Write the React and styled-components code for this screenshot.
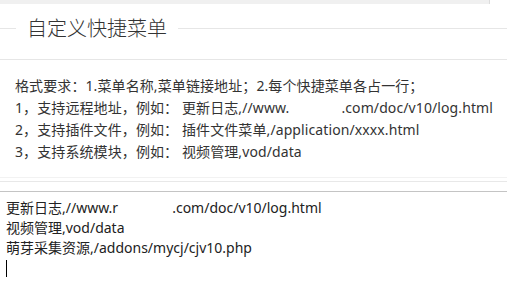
import React from "react";
import styled, { createGlobalStyle } from "styled-components";

const Global = createGlobalStyle`
  html, body { margin: 0; padding: 0; background: #fff; }
  body {
    font-family: "Noto Sans", "Noto Sans CJK SC", sans-serif;
    color: #333;
    overflow: hidden;
  }
`;

const Page = styled.div`
  width: 507px;
  height: 297px;
  overflow: hidden;
  display: flex;
  flex-direction: column;
`;

const TopStrip = styled.div`
  height: 4px;
  width: 490px;
  background: #f0f0f0;
  border-right: 1px solid #dcdcdc;
  box-sizing: border-box;
`;

const TitleField = styled.fieldset`
  margin: 10px 0 0;
  padding: 0;
  border: none;
  border-top: 1px solid #e6e6e6;
  height: 44px;
  min-width: 0;
`;

const Legend = styled.legend`
  margin-left: 16px;
  padding: 0 11px;
  font-family: "Noto Sans CJK SC", sans-serif;
  font-size: 20px;
  font-weight: 300;
  line-height: 28px;
  color: #333;
`;

const HelpBox = styled.div`
  border-top: 1px solid #e6e6e6;
  border-bottom: 1px solid #f2f2f2;
  padding: 15px 0 14px 15px;
`;

const HelpLine = styled.div`
  font-size: 14px;
  line-height: 22px;
  white-space: nowrap;
  letter-spacing: 0.1px;
`;

const Gap = styled.span`
  display: inline-block;
  width: ${(p) => p.$w}px;
`;

const Divider = styled.div`
  margin-top: 3px;
  border-top: 1px solid #e8e8e8;
  height: 9px;
`;

const Editor = styled.div`
  flex: 1;
  border-top: 1px solid #c4c4c4;
  padding: 6px 6px;
  font-size: 14px;
  line-height: 20px;
  color: #222;
  white-space: nowrap;
`;

const EditorLine = styled.div``;

const Caret = styled.div`
  width: 1px;
  height: 17px;
  margin-top: 2px;
  background: #000;
`;

export default function App() {
  return (
    <Page>
      <Global />
      <TopStrip />
      <TitleField>
        <Legend>自定义快捷菜单</Legend>
      </TitleField>
      <HelpBox>
        <HelpLine>格式要求：1.菜单名称,菜单链接地址；2.每个快捷菜单各占一行；</HelpLine>
        <HelpLine>
          1，支持远程地址，例如： 更新日志,//www.<Gap $w={52} />.com/doc/v10/log.html
        </HelpLine>
        <HelpLine>2，支持插件文件，例如： 插件文件菜单,/application/xxxx.html</HelpLine>
        <HelpLine>3，支持系统模块，例如： 视频管理,vod/data</HelpLine>
      </HelpBox>
      <Divider />
      <Editor>
        <EditorLine>
          更新日志,//www.r<Gap $w={54} />.com/doc/v10/log.html
        </EditorLine>
        <EditorLine>视频管理,vod/data</EditorLine>
        <EditorLine>萌芽采集资源,/addons/mycj/cjv10.php</EditorLine>
        <Caret />
      </Editor>
    </Page>
  );
}
